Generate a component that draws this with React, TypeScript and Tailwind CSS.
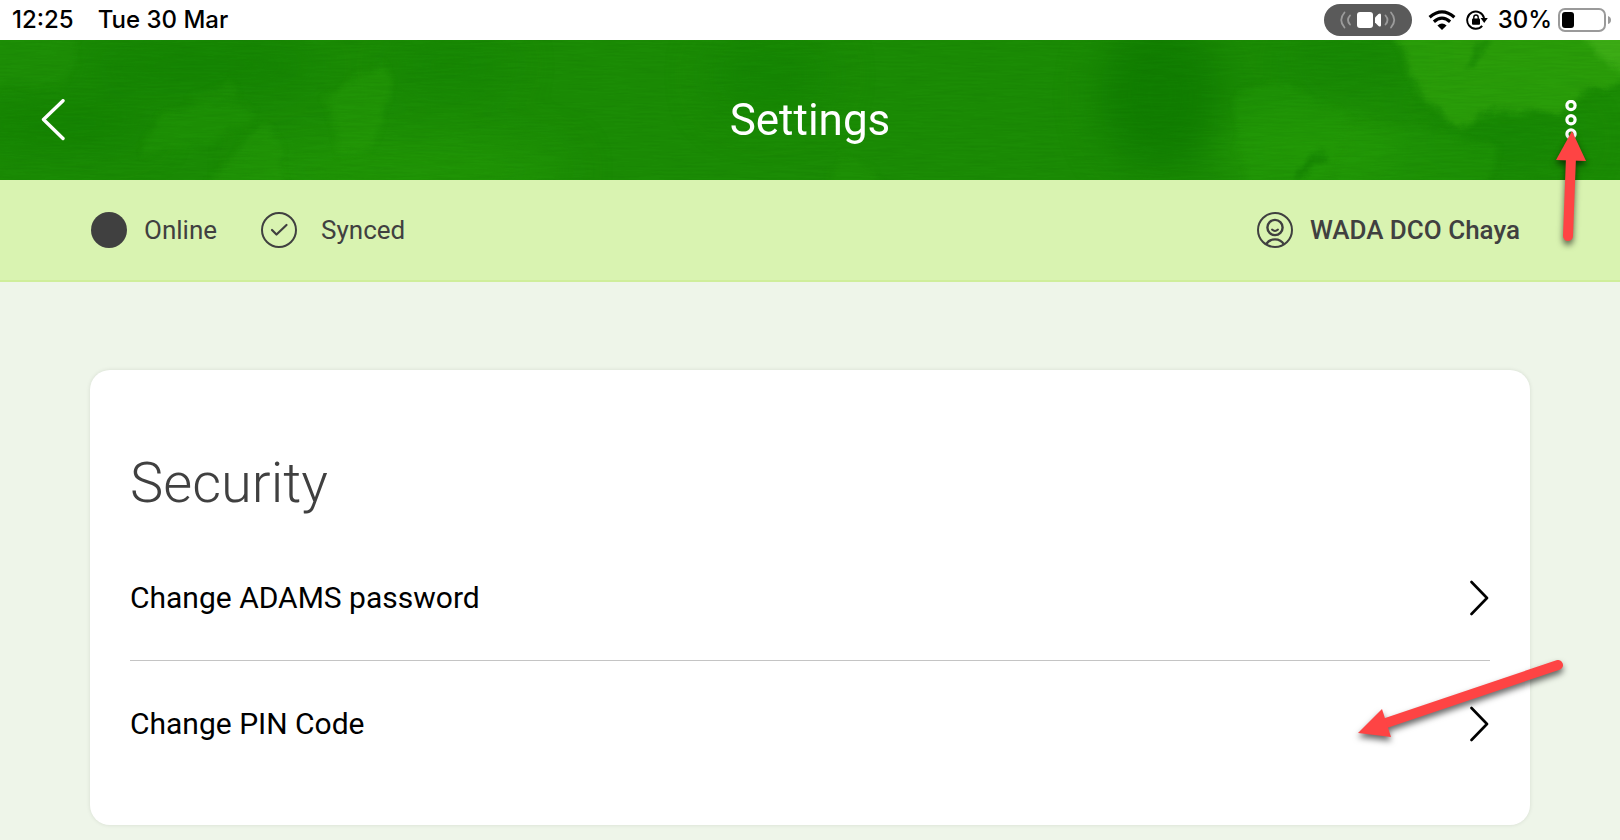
import React from 'react';

const securityItems = ['Change ADAMS password', 'Change PIN Code'];

function CameraPill() {
  return (
    <svg width="88" height="32" viewBox="0 0 88 32" aria-hidden="true">
      <rect width="88" height="32" rx="16" fill="#5a5a5a" />
      <rect x="33" y="8" width="16" height="16" rx="3" fill="#fff" />
      <path d="M51 13.5 L54.5 10 Q57 8.5 57 11 V21 Q57 23.5 54.5 22 L51 18.5 Z" fill="#fff" />
      <g fill="none" stroke="#9b9b9b" strokeWidth="1.8" strokeLinecap="round">
        <path d="M20.5 8.5 Q14 16 20.5 23.5" />
        <path d="M26 11.5 Q22 16 26 20.5" />
        <path d="M61.5 11.5 Q65.5 16 61.5 20.5" />
        <path d="M67 8.5 Q73.5 16 67 23.5" />
      </g>
    </svg>
  );
}

function WifiIcon() {
  return (
    <svg width="28" height="20" viewBox="0 0 28 20" aria-hidden="true">
      <g fill="none" stroke="#000" strokeWidth="3.2">
        <path d="M1.6 7.2 Q14 -3.6 26.4 7.2" />
        <path d="M5.9 11.7 Q14 4.6 22.1 11.7" />
      </g>
      <path d="M14 20 L9.4 15.4 Q14 11.6 18.6 15.4 Z" fill="#000" />
    </svg>
  );
}

function RotationLockIcon() {
  return (
    <svg width="22" height="20" viewBox="0 0 22 20" aria-hidden="true">
      <path d="M16.2 15.9 A8.6 8.6 0 1 1 18.1 8" fill="none" stroke="#000" strokeWidth="1.9" />
      <path d="M14.6 8 H21.8 L18.2 13 Z" fill="#000" />
      <rect x="6" y="8.6" width="8" height="6.2" rx="1" fill="#000" />
      <path d="M7.8 9 V7.2 A2.2 2.2 0 0 1 12.2 7.2 V9" fill="none" stroke="#000" strokeWidth="1.4" />
    </svg>
  );
}

function BatteryIcon() {
  return (
    <svg width="54" height="24" viewBox="0 0 54 24" aria-hidden="true">
      <rect x="1" y="1" width="46" height="22" rx="6" fill="#fff" stroke="#9a9a9a" strokeWidth="2" />
      <rect x="4" y="4" width="12" height="16" rx="3" fill="#000" />
      <path d="M50 8 Q53 9 53 12 Q53 15 50 16 Z" fill="#9a9a9a" />
    </svg>
  );
}

function HeaderTexture() {
  return (
    <svg
      className="absolute inset-0 h-full w-full"
      viewBox="0 0 1620 140"
      preserveAspectRatio="none"
      aria-hidden="true"
    >
      <defs>
        <filter id="soft" x="-20%" y="-50%" width="140%" height="200%" colorInterpolationFilters="sRGB">
          <feGaussianBlur stdDeviation="20" />
        </filter>
        <filter id="brush" x="-10%" y="-20%" width="120%" height="140%" colorInterpolationFilters="sRGB">
          <feTurbulence type="fractalNoise" baseFrequency="0.04" numOctaves="4" seed="4" result="noise" />
          <feGaussianBlur in="SourceGraphic" stdDeviation="3" result="blurred" />
          <feDisplacementMap in="blurred" in2="noise" scale="14" xChannelSelector="R" yChannelSelector="G" />
        </filter>
        <filter id="grain" x="0" y="0" width="100%" height="100%" colorInterpolationFilters="sRGB">
          <feTurbulence type="fractalNoise" baseFrequency="0.03 0.5" numOctaves="3" seed="7" />
          <feColorMatrix values="0 0 0 0 0  0 0 0 0 0.25  0 0 0 0 0  1.2 0 0 0 -0.45" />
        </filter>
      </defs>
      <rect width="1620" height="140" fill="#1b8c05" />
      <g filter="url(#soft)">
        <ellipse cx="60" cy="85" rx="90" ry="25" fill="#148302" />
        <ellipse cx="200" cy="25" rx="120" ry="30" fill="#158503" />
        <ellipse cx="450" cy="25" rx="60" ry="30" fill="#178804" />
        <ellipse cx="770" cy="35" rx="60" ry="45" fill="#168703" />
        <ellipse cx="1160" cy="55" rx="60" ry="75" fill="#117e01" />
        <ellipse cx="1350" cy="20" rx="60" ry="25" fill="#178804" />
        <ellipse cx="1510" cy="100" rx="70" ry="25" fill="#178804" />
        <ellipse cx="410" cy="130" rx="160" ry="35" fill="#209506" />
        <ellipse cx="1310" cy="110" rx="90" ry="35" fill="#239907" />
      </g>
      <g filter="url(#brush)">
        <path d="M-20 -20 H75 L78 20 L60 45 H-20 Z" fill="#1f9207" opacity="0.5" />
        <path d="M142 115 Q145 85 175 70 L230 60 L255 72 Q230 95 195 105 Z" fill="#229707" opacity="0.45" />
        <path d="M190 58 L235 42 L240 55 L195 62 Z" fill="#229707" opacity="0.4" />
        <path d="M205 150 L240 105 Q262 80 275 90 L285 150 Z" fill="#259b08" opacity="0.45" />
        <path d="M328 60 Q350 30 385 28 Q396 32 385 70 L372 110 L340 115 Z" fill="#259b08" opacity="0.5" />
        <path d="M825 155 L840 112 L870 128 L890 155 Z" fill="#229707" opacity="0.35" />
        <path d="M1235 70 Q1240 40 1290 45 L1350 80 L1320 155 H1250 Z" fill="#249a08" opacity="0.4" />
        <path d="M1395 0 L1410 -30 H1650 V30 L1590 50 L1560 72 L1490 72 L1455 88 L1425 60 Z" fill="#2da00b" opacity="0.85" />
        <path d="M1350 85 L1420 85 L1500 110 L1480 155 H1330 Z" fill="#249a08" opacity="0.4" />
        <path d="M1570 -20 H1650 V45 L1600 18 Z" fill="#45b31b" opacity="0.7" />
        <path d="M1486 -2 L1470 28" stroke="#148203" strokeWidth="4" />
        <path d="M1296 140 L1325 114" stroke="#168503" strokeWidth="8" />
      </g>
      <rect width="1620" height="140" filter="url(#grain)" opacity="0.12" />
    </svg>
  );
}

function ProfileIcon() {
  return (
    <svg width="36" height="36" viewBox="0 0 36 36" fill="none" stroke="#404040" strokeWidth="2" aria-hidden="true">
      <circle cx="18" cy="18" r="17" />
      <circle cx="18" cy="15.5" r="7.6" strokeWidth="2.4" />
      <path d="M15 17.6 Q18 20.4 21 17.6" strokeLinecap="round" />
      <path d="M9 32.5 Q12 27.4 18 27.4 Q24 27.4 27 32.5" strokeWidth="2.4" />
    </svg>
  );
}

function Chevron() {
  return (
    <svg width="20" height="36" viewBox="0 0 20 36" aria-hidden="true">
      <path d="M1.5 2 L17 18 L1.5 34" fill="none" stroke="#000" strokeWidth="2.6" strokeLinecap="round" strokeLinejoin="round" />
    </svg>
  );
}

function Arrow({ className, viewBox, d, x1, y1, x2, y2 }: {
  className: string; viewBox: string; d: string; x1: number; y1: number; x2: number; y2: number;
}) {
  return (
    <svg className={`pointer-events-none absolute z-10 overflow-visible drop-shadow-[0_4px_3px_rgba(0,0,0,0.6)] ${className}`} viewBox={viewBox} aria-hidden="true">
      <line x1={x1} y1={y1} x2={x2} y2={y2} stroke="#fe4444" strokeWidth="10" strokeLinecap="round" />
      <path d={d} fill="#fe4444" />
    </svg>
  );
}

function App() {
  return (
    <main className="min-h-screen bg-[#eef5e9] font-[Roboto,sans-serif] text-[#404040]">
      <div className="flex h-10 items-center justify-between bg-white pl-3 pr-2 font-[Inter,sans-serif] text-2xl font-medium text-black">
        <div className="flex gap-6">
          <span>12:25</span>
          <span>Tue 30 Mar</span>
        </div>
        <div className="flex items-center">
          <CameraPill />
          <span className="ml-4"><WifiIcon /></span>
          <span className="ml-2.5"><RotationLockIcon /></span>
          <span className="ml-2.5 mr-1.5">30%</span>
          <BatteryIcon />
        </div>
      </div>

      <header className="relative">
        <HeaderTexture />
        <div className="relative flex h-35 items-center justify-between px-10 pt-5 text-white">
          <button type="button" aria-label="Back" className="w-6">
            <svg width="26" height="42" viewBox="0 0 26 42" aria-hidden="true">
              <path d="M23 1.7 L3.5 20.5 L23 39.5" fill="none" stroke="#fff" strokeWidth="3.4" strokeLinecap="round" strokeLinejoin="round" />
            </svg>
          </button>
          <h1 className="text-[44px] leading-13">Settings</h1>
          <button type="button" aria-label="More options" className="flex w-6 justify-end">
            <svg width="16" height="40" viewBox="0 0 16 40" fill="none" stroke="#fff" strokeWidth="3.2" aria-hidden="true">
              <circle cx="7" cy="5.5" r="4.1" />
              <circle cx="7" cy="19.8" r="4.1" />
              <circle cx="7" cy="34" r="4.1" />
            </svg>
          </button>
        </div>
        <Arrow
          className="right-[34px] top-[91px] h-[116px] w-[30px]"
          viewBox="0 0 30 116"
          d="M16 0 L30 30 L0 29 Z"
          x1={15}
          y1={26}
          x2={12}
          y2={105}
        />
      </header>

      <section className="flex items-center justify-between border-b-2 border-[#cfee9b] bg-[#d9f3b1] px-[91px] py-8 text-[26px] leading-9">
        <div className="flex items-center">
          <span className="size-9 rounded-full bg-[#404040]" />
          <span className="ml-[17px]">Online</span>
          <svg className="ml-11" width="36" height="36" viewBox="0 0 36 36" fill="none" stroke="#404040" strokeWidth="2" aria-hidden="true">
            <circle cx="18" cy="18" r="17" />
            <path d="M11 18 L15.5 22.5 L25.5 13" strokeWidth="2.2" strokeLinecap="round" strokeLinejoin="round" />
          </svg>
          <span className="ml-6">Synced</span>
        </div>
        <div className="flex items-center gap-[17px] pr-[9px] font-medium">
          <ProfileIcon />
          <span>WADA DCO Chaya</span>
        </div>
      </section>

      <section className="relative mx-[90px] mt-[88px] rounded-[20px] bg-white px-10 pb-[39px] pt-20 shadow-[0_0_4px_rgba(0,0,0,0.1)]">
        <h2 className="text-[56px] font-light leading-[66px]">Security</h2>
        <ul className="mt-[19px] divide-y divide-[#c4c4c4]">
          {securityItems.map((item) => (
            <li key={item}>
              <button type="button" className="flex w-full items-center justify-between py-11 text-left text-[30px] leading-[37px] text-black">
                <span>{item}</span>
                <Chevron />
              </button>
            </li>
          ))}
        </ul>
        <Arrow
          className="-right-[34px] top-[289px] h-[80px] w-[206px]"
          viewBox="0 0 206 80"
          d="M0 74 L24 50 L33 78 Z"
          x1={28}
          y1={64}
          x2={200}
          y2={6}
        />
      </section>
    </main>
  );
}

export default App;
